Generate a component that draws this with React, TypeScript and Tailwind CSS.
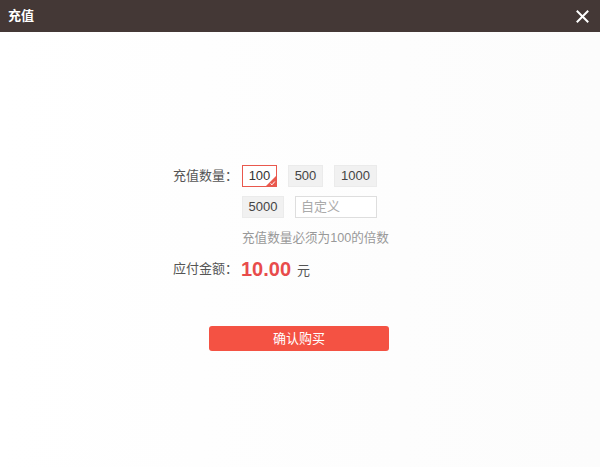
import React from "react";

export default function App() {
  const font = { fontFamily: '"Liberation Sans", "Noto Sans CJK SC", sans-serif' };
  return (
    <div className="w-[600px] h-[467px] bg-white flex flex-col overflow-hidden" style={font}>
      <div className="h-8 bg-[#443836] flex items-center justify-between pl-[8px] pr-[11px] shrink-0">
        <span className="text-white text-[13px] font-bold">充值</span>
        <svg width="13" height="13" viewBox="0 0 13 13">
          <path d="M1.5 1.5 L11.5 11.5 M11.5 1.5 L1.5 11.5" stroke="#fff" strokeWidth="2" strokeLinecap="square" />
        </svg>
      </div>
      <div className="flex-1 bg-gradient-to-r from-white to-[#fcfcfc] pt-[133px]">
        <div className="flex pl-[173px]">
          <div className="w-[69px] h-[22px] flex items-center text-[13px] text-[#555]">充值数量：</div>
          <div className="flex flex-col">
            <div className="flex gap-[11px]">
              <div className="relative h-[22px] w-[35px] border border-[#e9584d] bg-white flex items-center justify-center text-[13px] text-[#333]">
                100
                <svg width="10" height="10" viewBox="0 0 10 10" className="absolute right-0 bottom-0">
                  <path d="M10 0 L10 10 L0 10 Z" fill="#e9584d" />
                  <path d="M4.5 7.5 L6 8.8 L8.8 5.5" stroke="#fff" strokeWidth="1" fill="none" />
                </svg>
              </div>
              <div className="h-[22px] w-[35px] border border-[#ebebeb] bg-[#f1f1f1] flex items-center justify-center text-[13px] text-[#444]">500</div>
              <div className="h-[22px] w-[43px] border border-[#ebebeb] bg-[#f1f1f1] flex items-center justify-center text-[13px] text-[#444]">1000</div>
            </div>
            <div className="flex gap-[11px] mt-[9px]">
              <div className="h-[22px] w-[42px] border border-[#ebebeb] bg-[#f1f1f1] flex items-center justify-center text-[13px] text-[#444]">5000</div>
              <div className="h-[22px] w-[82px] border border-[#dedede] bg-white flex items-center pl-[5px] text-[13px] text-[#aaa]">自定义</div>
            </div>
            <div className="mt-[11px] h-[18px] flex items-center text-[12.6px] text-[#999]">充值数量必须为100的倍数</div>
          </div>
        </div>
        <div className="flex pl-[173px] mt-[8px] h-[28px] items-center">
          <div className="w-[68px] text-[13px] text-[#555]">应付金额：</div>
          <span className="text-[20px] font-bold text-[#e84b4b] leading-none">10.00</span>
          <span className="ml-[6px] mt-[3px] text-[13px] text-[#555]">元</span>
        </div>
        <div className="mt-[43px] flex pl-[209px]">
          <button className="w-[180px] h-[25px] rounded-[3px] bg-[#f45243] text-white text-[13px] flex items-center justify-center">确认购买</button>
        </div>
      </div>
    </div>
  );
}
